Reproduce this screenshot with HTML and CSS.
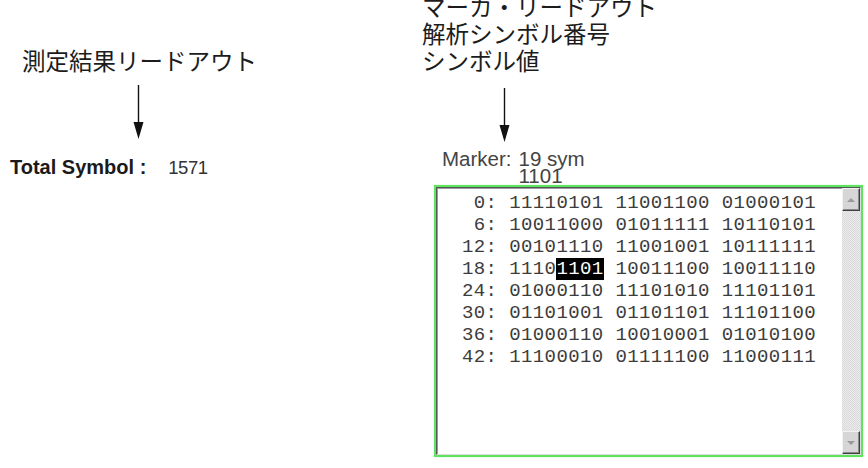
FILE: index.html
```html
<!DOCTYPE html>
<html lang="ja">
<head>
<meta charset="utf-8">
<title>Symbol Table</title>
<link rel="stylesheet" href="styles.css">
</head>
<body>
<div class="page">
  <section class="col col-left">
    <div class="caption caption-left">測定結果リードアウト</div>
    <svg class="arrow arrow-left" width="11" height="54" viewBox="0 0 11 54">
      <line x1="5.5" y1="0" x2="5.5" y2="40" stroke="#111" stroke-width="1.4"/>
      <polygon points="0.5,37 10.5,37 5.5,54" fill="#111"/>
    </svg>
    <div class="total">
      <span class="total-label">Total Symbol :</span>
      <span class="total-value">1571</span>
    </div>
  </section>

  <section class="col col-right">
    <div class="caption caption-right">
      <div>マーカ・リードアウト</div>
      <div>解析シンボル番号</div>
      <div>シンボル値</div>
    </div>
    <svg class="arrow arrow-right" width="11" height="54" viewBox="0 0 11 54">
      <line x1="5.5" y1="0" x2="5.5" y2="40" stroke="#111" stroke-width="1.4"/>
      <polygon points="0.5,37 10.5,37 5.5,54" fill="#111"/>
    </svg>
    <div class="marker">
      <span class="marker-key">Marker:</span>
      <span class="marker-val">19 sym</span>
      <span class="marker-val marker-bits">1101</span>
    </div>
    <div class="listbox">
      <div class="list">
<pre class="rows"> 0: 11110101 11001100 01000101
 6: 10011000 01011111 10110101
12: 00101110 11001001 10111111
18: 1110<span class="hl">1101</span> 10011100 10011110
24: 01000110 11101010 11101101
30: 01101001 01101101 11101100
36: 01000110 10010001 01010100
42: 11100010 01111100 11000111</pre>
        <div class="scrollbar">
          <div class="sb-btn sb-up"><span class="tri tri-up"></span></div>
          <div class="sb-track"></div>
          <div class="sb-btn sb-down"><span class="tri tri-down"></span></div>
        </div>
      </div>
    </div>
  </section>
</div>
</body>
</html>
```

FILE: styles.css
```css
html, body {
  margin: 0;
  padding: 0;
  background: #ffffff;
}

body {
  width: 868px;
  height: 468px;
  overflow: hidden;
}

.page {
  display: flex;
  align-items: flex-start;
}

.col {
  display: flex;
  flex-direction: column;
  align-items: flex-start;
}

.col-left {
  width: 412px;
  padding-left: 10px;
}

.col-right {
  flex: 1;
}

/* Japanese annotation captions */
.caption {
  font-family: "Noto Sans CJK JP", sans-serif;
  font-size: 23.5px;
  line-height: 27px;
  color: #1c1c1c;
  white-space: nowrap;
}

.caption-left {
  margin-top: 47px;
  margin-left: 12px;
}

.caption-right {
  margin-top: -7px;
}

.arrow {
  display: block;
}

.arrow-left {
  margin-top: 11px;
  margin-left: 123px;
}

.arrow-right {
  margin-top: 14px;
  margin-left: 77px;
}

/* Total symbol readout */
.total {
  margin-top: 17px;
  display: flex;
  align-items: baseline;
  font-family: "Liberation Sans", Arial, sans-serif;
  line-height: 22px;
  color: #1a1a1a;
}

.total-label {
  font-weight: bold;
  font-size: 20px;
}

.total-value {
  margin-left: 22px;
  font-size: 18.5px;
  letter-spacing: -0.5px;
  color: #333;
}

/* Marker readout */
.marker {
  margin-top: 8px;
  margin-left: 20px;
  display: grid;
  grid-template-columns: auto auto;
  column-gap: 7px;
  font-family: "Liberation Sans", Arial, sans-serif;
  font-size: 20.5px;
  line-height: 17px;
  color: #444;
}

.marker-bits {
  grid-column: 2;
}

/* Symbol list box */
.listbox {
  margin-top: 1px;
  margin-left: 12px;
  width: 429px;
  height: 272px;
  box-sizing: border-box;
  border: 2px solid #5ee45e;
  box-shadow: 0 0 1px #9af09a;
}

.list {
  height: 100%;
  box-sizing: border-box;
  display: flex;
  border-style: solid;
  border-width: 1px;
  border-color: #555 #dcdcdc #dcdcdc #555;
  box-shadow: inset 1px 1px 0 #9a9a9a;
  background: #fff;
}

.rows {
  flex: 1;
  margin: 0;
  padding: 4px 0 0 25px;
  font-family: "Liberation Mono", "Courier New", monospace;
  font-size: 19px;
  letter-spacing: 0.4px;
  line-height: 22px;
  color: #3c3c3c;
}

.hl {
  background: #000;
  color: #fff;
}

.scrollbar {
  width: 18px;
  display: flex;
  flex-direction: column;
  background-color: #e4e4e4;
  background-image: repeating-conic-gradient(#ececec 0 25%, #d9d9d9 0 50%);
  background-size: 2px 2px;
}

.sb-btn {
  height: 23px;
  box-sizing: border-box;
  background: #d6d6d6;
  border-style: solid;
  border-width: 1px;
  border-color: #f2f2f2 #404040 #404040 #f2f2f2;
  box-shadow: inset -1px -1px 0 #8a8a8a;
  display: flex;
  align-items: center;
  justify-content: center;
}

.sb-track {
  flex: 1;
}

.tri {
  width: 0;
  height: 0;
  border-left: 4px solid transparent;
  border-right: 4px solid transparent;
}

.tri-up {
  border-bottom: 4px solid #9a9a9a;
}

.tri-down {
  border-top: 4px solid #9a9a9a;
}
```
